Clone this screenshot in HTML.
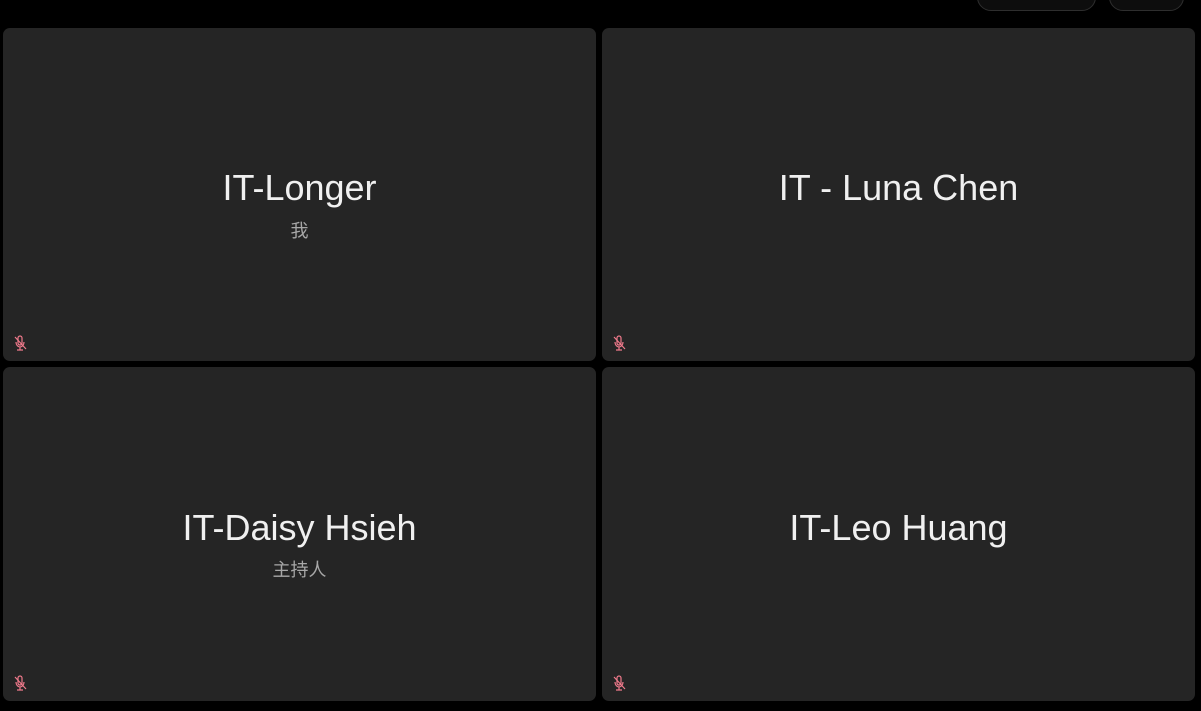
<!DOCTYPE html><html><head><meta charset="utf-8"><style>
body{margin:0;width:1201px;height:711px;background:#000;position:relative;overflow:hidden;font-family:"Liberation Sans","Noto Sans CJK SC",sans-serif}
.t{position:absolute;width:593px;height:333px;background:#252525;border-radius:7px}
.n{position:absolute;left:0;right:0;top:138px;text-align:center;color:#f0f0f0;font-size:36px;line-height:44px}
.s{position:absolute;left:0;right:0;top:189px;text-align:center;color:#a8a8a8;font-size:18px}
.m{position:absolute;left:10px;bottom:10px;width:14px;height:16px}
.p{position:absolute;border:1px solid #2e2e2e;border-radius:14px;background:#0d0d0d}
</style></head><body>
<div class="p" style="left:977px;top:-20px;width:117px;height:29px"></div>
<div class="p" style="left:1109px;top:-20px;width:73px;height:29px"></div>
<div class="t" style="left:3px;top:28px"><div class="n">IT-Longer</div><div class="s">我</div><svg class="m" viewBox="0 0 14 16" fill="none" stroke="#f07a8c" stroke-width="1.2"><rect x="5" y="1" width="4" height="9" rx="2"/><path d="M3 7c0 3 2 5 4 5s4-2 4-5M7 12v3M4 15h6M2 2l11 12"/></svg></div>
<div class="t" style="left:602px;top:28px"><div class="n">IT - Luna Chen</div><svg class="m" viewBox="0 0 14 16" fill="none" stroke="#f07a8c" stroke-width="1.2"><rect x="5" y="1" width="4" height="9" rx="2"/><path d="M3 7c0 3 2 5 4 5s4-2 4-5M7 12v3M4 15h6M2 2l11 12"/></svg></div>
<div class="t" style="left:3px;top:367px;height:334px"><div class="n" style="top:139px">IT-Daisy Hsieh</div><div class="s" style="top:189px">主持人</div><svg class="m" viewBox="0 0 14 16" fill="none" stroke="#f07a8c" stroke-width="1.2"><rect x="5" y="1" width="4" height="9" rx="2"/><path d="M3 7c0 3 2 5 4 5s4-2 4-5M7 12v3M4 15h6M2 2l11 12"/></svg></div>
<div class="t" style="left:602px;top:367px;height:334px"><div class="n" style="top:139px">IT-Leo Huang</div><svg class="m" viewBox="0 0 14 16" fill="none" stroke="#f07a8c" stroke-width="1.2"><rect x="5" y="1" width="4" height="9" rx="2"/><path d="M3 7c0 3 2 5 4 5s4-2 4-5M7 12v3M4 15h6M2 2l11 12"/></svg></div>
</body></html>
